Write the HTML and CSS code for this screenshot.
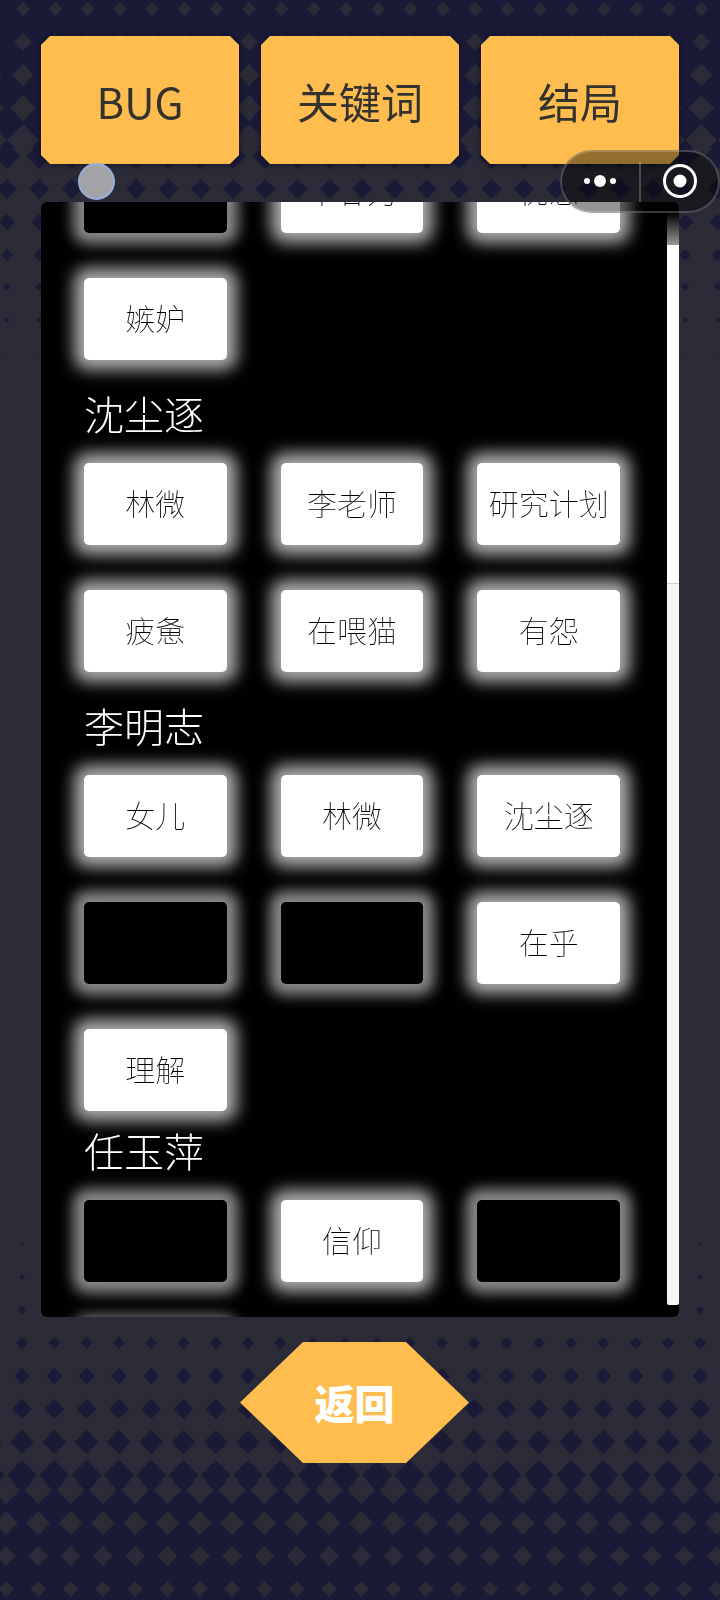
FILE: index.html
```html
<!DOCTYPE html>
<html lang="zh-CN">
<head>
    <meta charset="UTF-8">
    <meta name="viewport" content="width=device-width, initial-scale=1.0">
    <title>关键词</title>
    <link rel="stylesheet" href="styles.css">
</head>

<body>
    <!-- 菱形渐变背景 -->
    <svg class="backdrop" id="backdrop" viewBox="0 0 720 1600" preserveAspectRatio="none" aria-hidden="true">
        <rect class="navy" width="720" height="148"/>
        <rect class="navy" y="1481" width="720" height="119"/>
    </svg>

    <div class="page">
        <!-- 顶部标签 -->
        <nav class="tabs">
            <button class="tab">BUG</button>
            <button class="tab">关键词</button>
            <button class="tab">结局</button>
        </nav>

        <!-- 关键词列表 -->
        <main class="panel">
            <div class="list">
                <section class="group">
                    <div class="cards">
                        <button class="card locked" aria-label="未解锁"></button>
                        <button class="card">不甘为</button>
                        <button class="card">忧思</button>
                        <button class="card">嫉妒</button>
                    </div>
                </section>
                <section class="group">
                    <h2 class="name">沈尘逐</h2>
                    <div class="cards">
                        <button class="card">林微</button>
                        <button class="card">李老师</button>
                        <button class="card">研究计划</button>
                        <button class="card">疲惫</button>
                        <button class="card">在喂猫</button>
                        <button class="card">有怨</button>
                    </div>
                </section>
                <section class="group">
                    <h2 class="name">李明志</h2>
                    <div class="cards">
                        <button class="card">女儿</button>
                        <button class="card">林微</button>
                        <button class="card">沈尘逐</button>
                        <button class="card locked" aria-label="未解锁"></button>
                        <button class="card locked" aria-label="未解锁"></button>
                        <button class="card">在乎</button>
                        <button class="card">理解</button>
                    </div>
                </section>
                <section class="group close">
                    <h2 class="name">任玉萍</h2>
                    <div class="cards">
                        <button class="card locked" aria-label="未解锁"></button>
                        <button class="card">信仰</button>
                        <button class="card locked" aria-label="未解锁"></button>
                        <button class="card locked" aria-label="未解锁"></button>
                    </div>
                </section>
            </div>
            <!-- 滚动条 -->
            <div class="scrollbar">
                <div class="thumb"></div>
            </div>
        </main>

        <div class="footer">
            <button class="back">返回</button>
        </div>
    </div>

    <!-- 小程序胶囊按钮 -->
    <div class="capsule">
        <button class="capsule-btn" aria-label="更多">
            <svg width="36" height="36" viewBox="0 0 36 36" fill="#fff">
                <circle cx="4" cy="17" r="3"/>
                <circle cx="17" cy="17" r="6"/>
                <circle cx="30" cy="17" r="3"/>
            </svg>
        </button>
        <span class="capsule-line"></span>
        <button class="capsule-btn" aria-label="关闭">
            <svg width="36" height="36" viewBox="0 0 36 36">
                <circle cx="18" cy="17" r="15.500" fill="none" stroke="#fff" stroke-width="3"/>
                <circle cx="18" cy="17" r="6.500" fill="#fff"/>
            </svg>
        </button>
    </div>

    <!-- 触摸点 -->
    <div class="touch"></div>

    <script>
        // 每行菱形：[类名, 起始x, y, 半径]
        const rows = [
            ['grey', 23, 9, 7], ['grey', 23, 42, 9], ['grey', 23, 75, 11], ['grey', 23, 108, 13], ['grey', 23, 140, 16],
            ['navy', 7, 156, 13], ['navy', 7, 189, 10], ['navy', 7, 222, 8], ['navy', 7, 255, 6],
            ['navy', 7, 287, 4], ['navy', 7, 320, 3], ['navy', 7, 353, 1],
            ['navy', 22, 1244, 2], ['navy', 22, 1277, 3], ['navy', 22, 1310, 4], ['navy', 22, 1343, 6],
            ['navy', 22, 1376, 8], ['navy', 22, 1409, 10], ['navy', 22, 1442, 12], ['navy', 22, 1475, 15],
            ['grey', 6, 1490, 14], ['grey', 6, 1523, 12], ['grey', 6, 1556, 10], ['grey', 6, 1589, 8]
        ];
        const step = 32.3;
        const backdrop = document.getElementById('backdrop');

        rows.forEach(([name, startX, y, r]) => {
            let d = '';
            for (let x = startX - step; x < 720 + step; x += step) {
                d += `M${x - r} ${y}L${x} ${y - r}L${x + r} ${y}L${x} ${y + r}Z`;
            }
            const path = document.createElementNS('http://www.w3.org/2000/svg', 'path');
            path.setAttribute('class', name);
            path.setAttribute('d', d);
            backdrop.appendChild(path);
        });
    </script>
</body>

</html>
```
FILE: styles.css
```css
:root {
    --grey: #2b2b37;
    --navy: #1a1a36;
    --orange: #ffbd50;
}

* {
    box-sizing: border-box;
}

body {
    margin: 0;
    background-color: var(--grey);
    font-family: "Noto Sans CJK SC", sans-serif;
    overflow: hidden;
}

button {
    padding: 0;
    border: none;
    background: none;
    font-family: inherit;
    cursor: pointer;
}

/* 背景 */
.backdrop {
    position: fixed;
    top: 0;
    left: 0;
    width: 100%;
    height: 100%;
}

.navy {
    fill: var(--navy);
}

.grey {
    fill: var(--grey);
}

.page {
    position: relative;
    display: flex;
    flex-direction: column;
    height: 100vh;
    padding: 36px 41px 137px;
}

/* 顶部标签 */
.tabs {
    display: grid;
    grid-template-columns: repeat(3, 1fr);
    gap: 22px;
    margin-bottom: 38px;
    filter: drop-shadow(0 0 3px rgba(10, 10, 40, 0.8));
}

.tab {
    height: 128px;
    background-color: var(--orange);
    color: #33322e;
    font-size: 42px;
    clip-path: polygon(9px 0, calc(100% - 9px) 0, 100% 9px, 100% calc(100% - 9px), calc(100% - 9px) 100%, 9px 100%, 0 calc(100% - 9px), 0 9px);
}

/* 关键词面板 */
.panel {
    display: flex;
    flex: 1;
    min-height: 0;
    border-radius: 6px;
    background-color: #000;
    overflow: hidden;
}

.list {
    flex: 1;
    margin-top: -51px;
    padding: 0 47px 0 43px;
}

.group + .group {
    padding-top: 24px;
}

.group + .close {
    padding-top: 10px;
}

.name {
    margin: 0 0 21px;
    color: #fff;
    font-size: 40px;
    font-weight: 300;
    line-height: 58px;
}

.cards {
    display: grid;
    grid-template-columns: repeat(3, 1fr);
    gap: 45px 54px;
}

.card {
    height: 82px;
    padding-bottom: 5px;
    border-radius: 5px;
    background-color: #fff;
    box-shadow: 0 0 16px 10px rgba(255, 255, 255, 0.68);
    color: #000;
    font-size: 30px;
    font-weight: 100;
    white-space: nowrap;
}

.locked {
    background-color: #000;
    box-shadow: 0 0 14px 11px rgba(255, 255, 255, 0.54);
}

/* 滚动条 */
.scrollbar {
    width: 12px;
    margin: 11px 0 12px;
    border-radius: 2px;
    background-color: #f5f5f5;
}

.thumb {
    height: 34%;
    border-bottom: 1px solid #ccc;
    background: linear-gradient(#000, #999 32px, #fff 32px);
}

/* 返回按钮 */
.footer {
    display: flex;
    justify-content: center;
    margin-top: 25px;
    padding-right: 11px;
}

.back {
    width: 229px;
    height: 121px;
    padding-bottom: 2px;
    background-color: var(--orange);
    color: #fff;
    font-size: 40px;
    font-weight: 900;
    clip-path: polygon(63px 0, calc(100% - 63px) 0, 100% 50%, calc(100% - 63px) 100%, 63px 100%, 0 50%);
}

/* 胶囊按钮 */
.capsule {
    position: absolute;
    top: 150px;
    right: 0;
    display: flex;
    align-items: center;
    width: 160px;
    height: 63px;
    border: 2px solid rgba(255, 255, 255, 0.22);
    border-radius: 32px;
    background-color: rgba(0, 0, 0, 0.42);
}

.capsule-btn {
    display: flex;
    flex: 1;
    align-items: center;
    justify-content: center;
}

.capsule-line {
    width: 2px;
    height: 40px;
    background-color: rgba(255, 255, 255, 0.22);
}

/* 触摸点 */
.touch {
    position: absolute;
    top: 163px;
    left: 78px;
    width: 37px;
    height: 37px;
    border: 2px solid #98aede;
    border-radius: 50%;
    background-color: #a3a3a7;
}
```
